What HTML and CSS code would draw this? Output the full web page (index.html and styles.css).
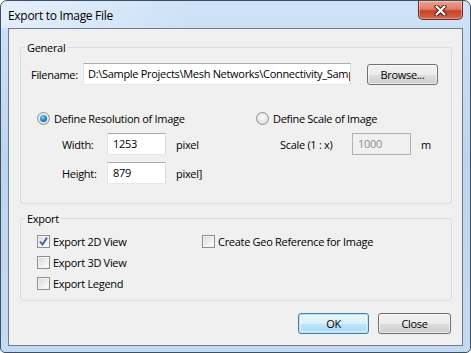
FILE: index.html
```html
<!DOCTYPE html>
<html lang="en">
<head>
    <meta charset="UTF-8">
    <title>Export to Image File</title>
    <link rel="stylesheet" href="styles.css">
</head>
<body>
    <div class="window">
        <div class="titlebar">
            <span class="title">Export to Image File</span>
            <div class="close-btn">
                <svg width="13" height="11" viewBox="0 0 13 11">
                    <path d="M2.5 1.5 L10.5 9.5 M10.5 1.5 L2.5 9.5" stroke="#4a1a12" stroke-width="4.2" stroke-linecap="round"/>
                    <path d="M2.5 1.5 L10.5 9.5 M10.5 1.5 L2.5 9.5" stroke="#fff" stroke-width="2.2" stroke-linecap="round"/>
                </svg>
            </div>
        </div>

        <div class="client">
            <fieldset class="group">
                <legend>General</legend>
                <div class="general-body">
                    <div class="file-row">
                        <span class="file-label">Filename:</span>
                        <div class="textbox file-box">D:\Sample Projects\Mesh Networks\Connectivity_Sample</div>
                        <div class="btn browse">Browse...</div>
                    </div>

                    <div class="modes">
                        <div class="mode">
                            <div class="option-row"><span class="radio checked"></span>Define Resolution of Image</div>
                            <div class="field-row size-row">
                                <span class="field-label">Width:</span>
                                <div class="textbox num-box">1253</div>
                                <span>pixel</span>
                            </div>
                            <div class="field-row size-row">
                                <span class="field-label">Height:</span>
                                <div class="textbox num-box">879</div>
                                <span>pixel]</span>
                            </div>
                        </div>
                        <div class="mode">
                            <div class="option-row"><span class="radio"></span>Define Scale of Image</div>
                            <div class="field-row scale-row">
                                <span class="field-label">Scale (1 : x)</span>
                                <div class="textbox num-box disabled">1000</div>
                                <span>m</span>
                            </div>
                        </div>
                    </div>
                </div>
            </fieldset>

            <fieldset class="group export">
                <legend>Export</legend>
                <div class="export-body">
                    <div class="option-row">
                        <span class="check">
                            <svg width="9" height="9" viewBox="0 0 9 9">
                                <path d="M1 4.5 L3.5 7.5 L8 0.8" fill="none" stroke="#3d5a9c" stroke-width="1.8"/>
                            </svg>
                        </span>Export 2D View
                    </div>
                    <div class="option-row"><span class="check"></span>Create Geo Reference for Image</div>
                    <div class="option-row"><span class="check"></span>Export 3D View</div>
                    <div></div>
                    <div class="option-row"><span class="check"></span>Export Legend</div>
                </div>
            </fieldset>

            <div class="buttons">
                <div class="btn default">OK</div>
                <div class="btn close">Close</div>
            </div>
        </div>
    </div>
</body>
</html>
```

FILE: styles.css
```css
body {
    margin: 0;
    font-family: "Open Sans", "Noto Sans", sans-serif;
    font-size: 11px;
    letter-spacing: -0.3px;
    color: #000;
    background: #fff;
}

.window {
    width: 471px;
    height: 353px;
    box-sizing: border-box;
    border: 1px solid #3f4f61;
    border-radius: 7px 7px 5px 5px;
    background: linear-gradient(to bottom, #cfe3f8 0%, #bcd5ee 45%, #c4daf1 100%);
    padding: 0 7px 6px 7px;
    display: flex;
    flex-direction: column;
}

.titlebar {
    height: 27px;
    display: flex;
    align-items: flex-start;
    background: linear-gradient(to right, rgba(255, 255, 255, 0.45), rgba(255, 255, 255, 0) 40%);
    margin: 0 -7px;
    padding: 0 7px;
    border-radius: 6px 6px 0 0;
}

.title {
    font-size: 12px;
    line-height: 16px;
    margin-top: 7px;
}

.close-btn {
    margin-left: auto;
    width: 45px;
    height: 19px;
    box-sizing: border-box;
    border: 1px solid #6a2a20;
    border-top: none;
    border-radius: 0 0 5px 5px;
    background: linear-gradient(to bottom, #eba392 0%, #de7f69 45%, #c8412a 55%, #d4654c 100%);
    box-shadow: inset 0 0 0 1px rgba(255, 255, 255, 0.35);
    display: flex;
    justify-content: center;
    align-items: center;
}

.client {
    flex: 1;
    border: 1px solid #6b7c8f;
    background: #f0f0f0;
    padding: 0 10px 11px 11px;
    display: flex;
    flex-direction: column;
}

.group {
    margin: 11px 0 0 0;
    padding: 0;
    border: 1px solid #d5dfe5;
    border-radius: 3px;
    min-width: 0;
}

.group legend {
    margin-left: 4px;
    padding: 0 2px;
    line-height: 15px;
}

.group.export {
    margin-top: 7px;
}

.general-body {
    padding: 8px 13px 19px 10px;
}

.file-row {
    display: flex;
    align-items: center;
    height: 22px;
}

.file-label {
    width: 52px;
    flex-shrink: 0;
}

.textbox {
    box-sizing: border-box;
    flex-shrink: 0;
    height: 22px;
    line-height: 19px;
    padding: 0 6px;
    background: #fff;
    border: 1px solid #abadb3;
    border-color: #abadb3 #dbdfe6 #e3e9ef #e2e3ea;
    white-space: nowrap;
    overflow: hidden;
}

.file-box {
    width: 268px;
    padding-left: 4px;
}

.btn {
    box-sizing: border-box;
    flex-shrink: 0;
    height: 21px;
    line-height: 19px;
    text-align: center;
    border: 1px solid #707070;
    border-radius: 3px;
    background: linear-gradient(to bottom, #f2f2f2 0%, #ebebeb 50%, #dddddd 51%, #cfcfcf 100%);
    box-shadow: inset 0 0 0 1px rgba(255, 255, 255, 0.6);
}

.browse {
    width: 71px;
    margin-left: 16px;
}

.modes {
    margin-top: 25px;
    padding-left: 6px;
    display: grid;
    grid-template-columns: 219px 1fr;
}

.option-row {
    display: flex;
    align-items: center;
    gap: 4px;
    height: 16px;
}

.radio {
    width: 13px;
    height: 13px;
    box-sizing: border-box;
    border-radius: 50%;
    border: 1px solid #8e8f8f;
    background: radial-gradient(circle at 50% 40%, #ffffff 0%, #e4e4e4 60%, #cfcfcf 100%);
    position: relative;
}

.radio.checked::after {
    content: "";
    position: absolute;
    left: 2px;
    top: 2px;
    width: 7px;
    height: 7px;
    border-radius: 50%;
    background: radial-gradient(circle at 40% 35%, #8ed0f8 0%, #2b8bd2 45%, #104b80 100%);
}

.field-row {
    display: flex;
    align-items: center;
    height: 22px;
    margin-top: 7px;
}

.mode .field-row:first-of-type {
    margin-top: 5px;
}

.size-row {
    padding-left: 25px;
}

.size-row .field-label {
    width: 45px;
}

.scale-row {
    padding-left: 24px;
}

.scale-row .field-label {
    width: 72px;
}

.num-box {
    width: 59px;
    margin-right: 10px;
    padding-left: 5px;
}

.num-box.disabled {
    background: #f0f0f0;
    border-color: #adb2b5;
    color: #8d8d8d;
}

.export-body {
    padding: 5px 0 6px 16px;
    display: grid;
    grid-template-columns: 165px 1fr;
    grid-auto-rows: 21px;
}

.export-body .option-row {
    height: 21px;
    gap: 3px;
}

.check {
    width: 13px;
    height: 13px;
    box-sizing: border-box;
    border: 1px solid #8e8f8f;
    background: linear-gradient(135deg, #d8d8d8 0%, #f0f0f0 60%, #ffffff 100%);
    box-shadow: inset 0 0 0 1px #f4f4f4;
    display: flex;
    justify-content: center;
    align-items: center;
}

.buttons {
    margin-top: auto;
    display: flex;
    justify-content: flex-end;
    gap: 9px;
    padding-right: 1px;
}

.buttons .btn.default {
    width: 71px;
    border-color: #3c7fb1;
    box-shadow: inset 0 0 0 1px #b6e4f9, inset 0 0 0 2px rgba(255, 255, 255, 0.5);
    background: linear-gradient(to bottom, #eaf6fd 0%, #d9f0fc 50%, #bee6fd 51%, #a7d9f5 100%);
}

.buttons .btn.close {
    width: 73px;
}
```
